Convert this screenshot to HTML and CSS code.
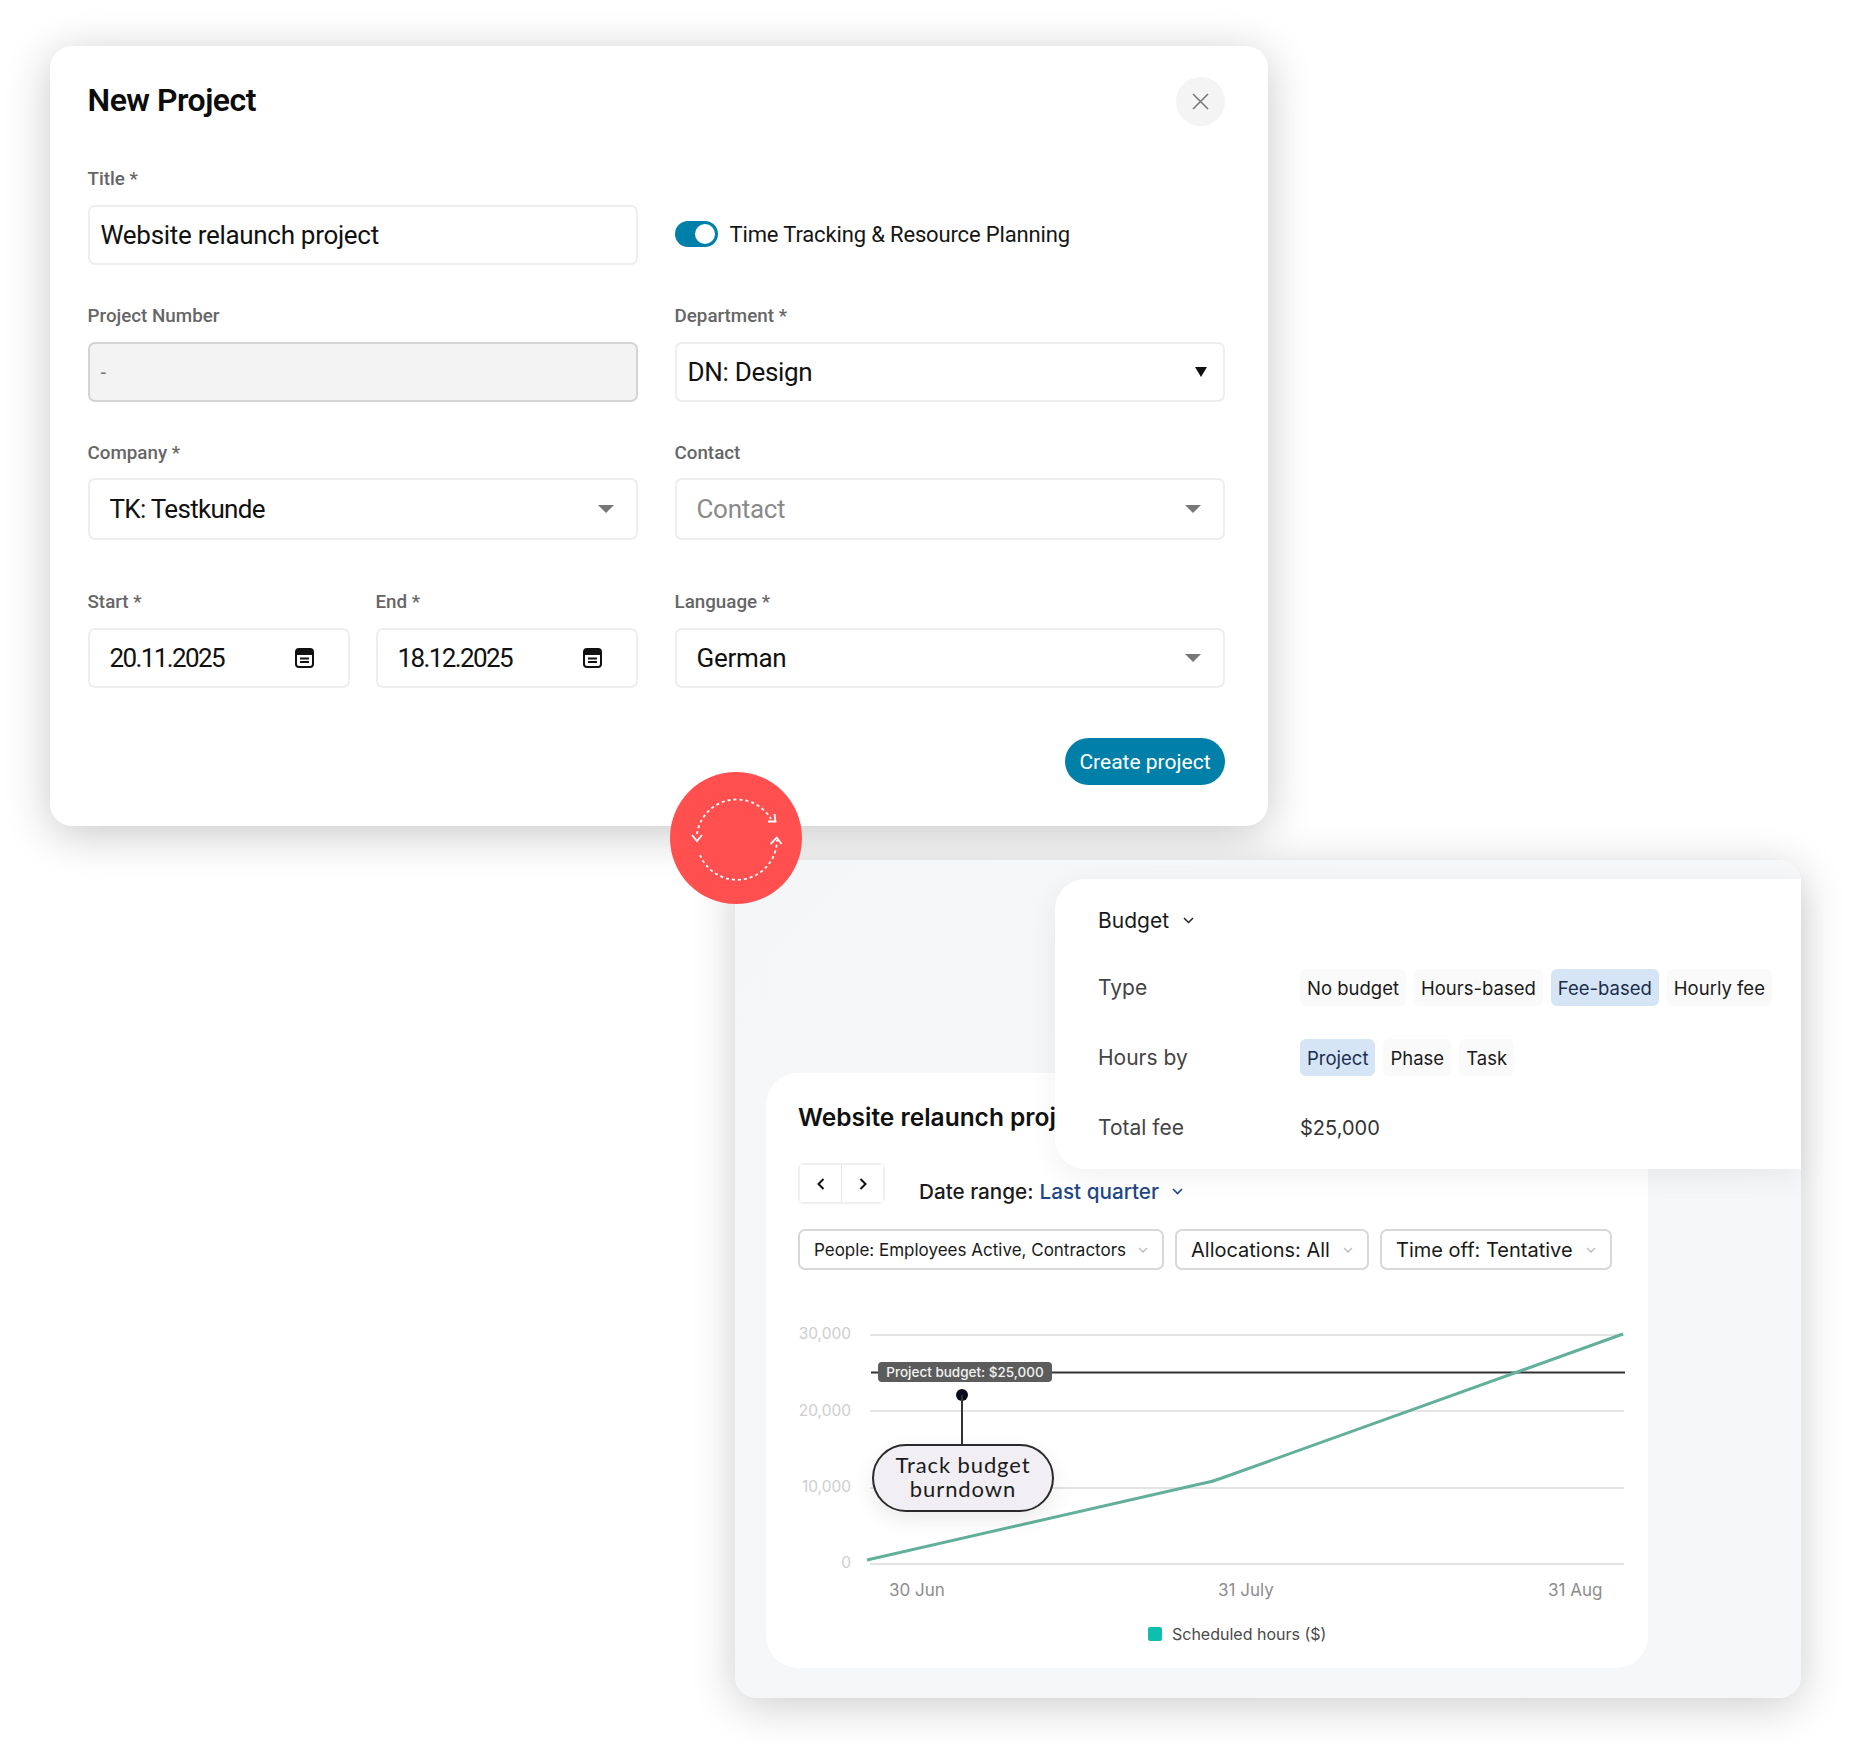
FILE: index.html
```html
<!DOCTYPE html>
<html lang="en">
<head>
    <meta charset="UTF-8">
    <title>New Project</title>
    <link rel="stylesheet" href="styles.css">
</head>
<body>
    <div class="modal">
        <div class="modal-head">
            <h1>New Project</h1>
            <button class="close-btn">
                <svg width="17" height="17" viewBox="0 0 17 17"><path d="M1 1L16 16M16 1L1 16" stroke="#7a7a7a" stroke-width="1.6" fill="none"/></svg>
            </button>
        </div>
        <div class="form-grid">
            <div class="field">
                <label>Title *</label>
                <div class="input input-title">Website relaunch project</div>
            </div>
            <div class="toggle-row">
                <span class="toggle"><span class="knob"></span></span>
                <span class="toggle-label">Time Tracking &amp; Resource Planning</span>
            </div>

            <div class="field">
                <label>Project Number</label>
                <div class="input input-disabled">-</div>
            </div>
            <div class="field">
                <label>Department *</label>
                <div class="input input-title">DN: Design <span class="caret caret-dark"></span></div>
            </div>

            <div class="field field-tall">
                <label>Company *</label>
                <div class="input input-select input-tight">TK: Testkunde <span class="caret"></span></div>
            </div>
            <div class="field field-tall">
                <label>Contact</label>
                <div class="input input-select placeholder">Contact <span class="caret"></span></div>
            </div>

            <div class="date-pair">
                <div class="field">
                    <label>Start *</label>
                    <div class="input input-select input-date">20.11.2025
                        <svg class="cal" width="19" height="20" viewBox="0 0 19 20"><rect x="1" y="1" width="17" height="18" rx="3" fill="#fff" stroke="#111" stroke-width="2"/><path d="M1 2h17v5H1z" fill="#111"/><path d="M5 10.5h9M5 14h9" stroke="#111" stroke-width="1.8"/></svg>
                    </div>
                </div>
                <div class="field">
                    <label>End *</label>
                    <div class="input input-select input-date">18.12.2025
                        <svg class="cal" width="19" height="20" viewBox="0 0 19 20"><rect x="1" y="1" width="17" height="18" rx="3" fill="#fff" stroke="#111" stroke-width="2"/><path d="M1 2h17v5H1z" fill="#111"/><path d="M5 10.5h9M5 14h9" stroke="#111" stroke-width="1.8"/></svg>
                    </div>
                </div>
            </div>
            <div class="field">
                <label>Language *</label>
                <div class="input input-select">German <span class="caret"></span></div>
            </div>
        </div>
        <div class="modal-foot">
            <button class="btn-create">Create project</button>
        </div>
        <div class="sync-badge">
            <svg width="132" height="132" viewBox="0 0 132 132" fill="none" stroke="#fff" stroke-width="1.8">
                <path d="M27 62A40 40 0 0 1 101 47" stroke-dasharray="3 3"/>
                <path d="M30 83A40 40 0 0 0 107 68" stroke-dasharray="3 3"/>
                <path d="M22 63L27 69L32 63"/>
                <path d="M98 49.5H105.5L104.5 42"/>
                <path d="M100.600 72L106.700 65.700L111.600 72"/>
            </svg>
        </div>
    </div>

    <div class="report">
        <div class="report-card">
            <h2>Website relaunch project</h2>
            <div class="range-row">
                <div class="pager">
                    <button><svg width="8" height="12" viewBox="0 0 8 12"><path d="M6.500 1L1.500 6L6.500 11" fill="none" stroke="#111" stroke-width="2"/></svg></button>
                    <button><svg width="8" height="12" viewBox="0 0 8 12"><path d="M1.500 1L6.500 6L1.500 11" fill="none" stroke="#111" stroke-width="2"/></svg></button>
                </div>
                <div class="date-range">Date range: <a>Last quarter</a>
                    <svg width="11" height="7" viewBox="0 0 11 7"><path d="M1 1L5.500 5.500L10 1" fill="none" stroke="#1f4788" stroke-width="1.600"/></svg>
                </div>
            </div>
            <div class="filters">
                <div class="filter filter-people">People: Employees Active, Contractors <svg width="10" height="6" viewBox="0 0 10 6"><path d="M1 1L5 5L9 1" fill="none" stroke="#bbb" stroke-width="1.300"/></svg></div>
                <div class="filter filter-alloc">Allocations: All <svg width="10" height="6" viewBox="0 0 10 6"><path d="M1 1L5 5L9 1" fill="none" stroke="#bbb" stroke-width="1.300"/></svg></div>
                <div class="filter filter-time">Time off: Tentative <svg width="10" height="6" viewBox="0 0 10 6"><path d="M1 1L5 5L9 1" fill="none" stroke="#bbb" stroke-width="1.300"/></svg></div>
            </div>
            <svg class="chart" width="882" height="378" viewBox="766 1290 882 378">
                <g stroke="#e4e4e4" stroke-width="2">
                    <path d="M870 1335H1624M870 1411H1624M870 1488H1624M870 1564H1624"/>
                </g>
                <g class="tick-y" text-anchor="end">
                    <text x="851" y="1339">30,000</text>
                    <text x="851" y="1416">20,000</text>
                    <text x="851" y="1492">10,000</text>
                    <text x="851" y="1568">0</text>
                </g>
                <path d="M871 1372.500H1625" stroke="#333" stroke-width="2"/>
                <path d="M867 1560L1200 1484Q1212 1482 1222 1478L1623 1334" fill="none" stroke="#62b09b" stroke-width="3"/>
                <rect x="878" y="1362" width="174" height="20" rx="4" fill="#5c5c5c"/>
                <text class="tag-text" x="965" y="1377" text-anchor="middle">Project budget: $25,000</text>
                <circle cx="962" cy="1395" r="6" fill="#0a0a1e"/>
                <path d="M962 1395V1444" stroke="#333" stroke-width="2"/>
                <rect class="pill" x="873" y="1445" width="180" height="66" rx="33" fill="#f1eff4" stroke="#2a2a2a" stroke-width="2"/>
                <text class="pill-text" x="963" y="1473" text-anchor="middle">Track budget</text>
                <text class="pill-text" x="963" y="1497" text-anchor="middle">burndown</text>
                <g class="tick-x">
                    <text x="889" y="1596">30 Jun</text>
                    <text x="1218" y="1596">31 July</text>
                    <text x="1548" y="1596">31 Aug</text>
                </g>
                <rect x="1148" y="1627" width="14" height="14" rx="2" fill="#0fbfae"/>
                <text class="legend" x="1172" y="1640">Scheduled hours ($)</text>
            </svg>
        </div>

        <div class="budget-panel">
            <div class="budget-head">Budget <svg width="11" height="7" viewBox="0 0 11 7"><path d="M1 1L5.500 5.500L10 1" fill="none" stroke="#222" stroke-width="1.500"/></svg></div>
            <div class="budget-row">
                <span class="budget-key">Type</span>
                <div class="chips">
                    <span class="chip">No budget</span>
                    <span class="chip">Hours-based</span>
                    <span class="chip chip-on">Fee-based</span>
                    <span class="chip">Hourly fee</span>
                </div>
            </div>
            <div class="budget-row">
                <span class="budget-key">Hours by</span>
                <div class="chips">
                    <span class="chip chip-on">Project</span>
                    <span class="chip">Phase</span>
                    <span class="chip">Task</span>
                </div>
            </div>
            <div class="budget-row">
                <span class="budget-key">Total fee</span>
                <span class="budget-val">$25,000</span>
            </div>
        </div>
    </div>
</body>
</html>
```

FILE: styles.css
```css
* {
    box-sizing: border-box;
    margin: 0;
    padding: 0;
}

body {
    background: #fff;
    font-family: Roboto, sans-serif;
    color: #111;
    padding: 46px 0 0 50px;
    width: 1851px;
    height: 1752px;
    overflow: hidden;
}

button {
    font-family: inherit;
    border: none;
    cursor: pointer;
}

.modal {
    position: relative;
    width: 1218px;
    height: 780px;
    padding: 31px 43px 40px 37.500px;
    background: #fff;
    border-radius: 22px;
    box-shadow: 0 8px 45px rgba(0, 0, 0, 0.22);
}

.modal-head {
    display: flex;
    justify-content: space-between;
    align-items: center;
    height: 49px;
    margin-bottom: 40px;
}

.modal-head h1 {
    font-size: 32px;
    font-weight: 600;
    letter-spacing: -0.5px;
    color: #0c0c0c;
    margin: -4px 0 0 0;
}

.close-btn {
    display: flex;
    align-items: center;
    justify-content: center;
    width: 49px;
    height: 49px;
    border-radius: 50%;
    background: #f4f4f4;
}

.form-grid {
    display: grid;
    grid-template-columns: 550px 550px;
    column-gap: 37px;
    grid-template-rows: 99px 99px 100px 99px;
    row-gap: 38px;
}

.form-grid > :nth-child(n+7) {
    margin-top: 11px;
}

.field label {
    display: block;
    height: 26px;
    line-height: 26px;
    margin-bottom: 13px;
    font-size: 18.800px;
    font-weight: 500;
    color: #666;
}

.field-tall label {
    margin-bottom: 12px;
}

.field-tall .input {
    height: 62px;
}

.input {
    position: relative;
    display: flex;
    align-items: center;
    justify-content: space-between;
    height: 60px;
    background: #fff;
    border: 2px solid #eee;
    border-radius: 7px;
    font-size: 26px;
    letter-spacing: -0.3px;
    color: #111;
}

.input-title {
    padding: 0 16px 0 11px;
}

.input-disabled {
    padding: 0 11px;
    background: #f3f3f3;
    border-color: #d4d4d4;
    color: #777;
    font-size: 20px;
}

.input-select {
    padding: 0 22px 0 20px;
}

.input-tight {
    letter-spacing: -0.7px;
}

.input-date {
    letter-spacing: -1.600px;
}

.placeholder {
    color: #8a8a8a;
}

.caret {
    width: 0;
    height: 0;
    border-left: 8px solid transparent;
    border-right: 8px solid transparent;
    border-top: 8px solid #777;
}

.caret-dark {
    border-left-width: 6px;
    border-right-width: 6px;
    border-top: 10px solid #111;
}

.toggle-row {
    display: flex;
    align-items: center;
    gap: 12px;
    margin: 38px 0 0 0;
    height: 60px;
}

.toggle {
    display: flex;
    align-items: center;
    justify-content: flex-end;
    width: 43px;
    height: 26px;
    padding-right: 3px;
    border-radius: 13px;
    background: #0080a8;
}

.knob {
    width: 20px;
    height: 20px;
    border-radius: 50%;
    background: #fff;
}

.toggle-label {
    font-size: 22px;
    letter-spacing: -0.15px;
    color: #161616;
}

.date-pair {
    display: grid;
    grid-template-columns: 262px 262px;
    column-gap: 26px;
}

.cal {
    flex: none;
    margin-right: 12px;
}

.modal-foot {
    display: flex;
    justify-content: flex-end;
    margin-top: 61px;
}

.btn-create {
    width: 160px;
    height: 47px;
    border-radius: 24px;
    background: #0080a8;
    color: #fff;
    font-size: 21px;
    font-weight: 400;
}

.sync-badge {
    position: absolute;
    left: 620px;
    top: 726px;
    z-index: 5;
    width: 132px;
    height: 132px;
    border-radius: 50%;
    background: #ff4f4f;
}

.report {
    position: relative;
    width: 1066px;
    height: 838px;
    margin: 34px 0 0 685px;
    padding: 213px 153px 30px 31px;
    background: linear-gradient(135deg, #f4f6f8 0%, #f6f7f9 100%);
    border-radius: 22px;
    box-shadow: 0 8px 45px rgba(0, 0, 0, 0.2);
    font-family: Inter, sans-serif;
}

.report-card {
    width: 882px;
    height: 595px;
    padding: 29px 0 0 32px;
    background: #fff;
    border-radius: 32px;
    overflow: hidden;
}

.report-card h2 {
    height: 30px;
    line-height: 30px;
    font-size: 24.500px;
    font-weight: 600;
    white-space: nowrap;
    color: #111;
}

.range-row {
    display: flex;
    margin-top: 31px;
}

.pager {
    display: flex;
    width: 87px;
    height: 41px;
    border: 2px solid #f0f0f0;
    border-radius: 6px;
}

.pager button {
    display: flex;
    flex: 1;
    align-items: center;
    justify-content: center;
    background: #fff;
}

.pager button + button {
    border-left: 1px solid #e8e8e8;
}

.date-range {
    display: flex;
    align-items: center;
    gap: 6px;
    height: 41px;
    margin: 8px 0 0 34px;
    font-size: 20.700px;
    font-weight: 500;
    color: #1a1a1a;
}

.date-range a {
    color: #1f4788;
}

.date-range svg {
    margin-left: 7px;
}

.filters {
    display: flex;
    gap: 11px;
    margin-top: 17px;
}

.filter {
    display: flex;
    align-items: center;
    justify-content: space-between;
    height: 41px;
    padding: 0 14px;
    border: 2px solid #d8d8d8;
    border-radius: 7px;
    font-size: 20px;
    color: #1a1a1a;
    white-space: nowrap;
}

.filter-people {
    width: 366px;
    font-size: 17px;
}

.filter-alloc {
    width: 194px;
}

.filter-time {
    width: 232px;
}

.chart {
    display: block;
    margin: 20px 0 0 -32px;
}

.tick-y text {
    font-size: 15.500px;
    fill: #cdcdcd;
}

.tick-x text {
    font-size: 17px;
    fill: #8d8d8d;
}

.tag-text {
    font-size: 13.500px;
    font-weight: 500;
    fill: #f2f2f2;
}

.pill {
    filter: drop-shadow(0 8px 10px rgba(0, 0, 0, 0.08));
}

.pill-text {
    font-family: Lato, sans-serif;
    font-size: 22px;
    letter-spacing: 0.900px;
    fill: #1c1c1c;
}

.legend {
    font-size: 16px;
    fill: #4a4a4a;
}

.budget-panel {
    position: absolute;
    top: 19px;
    right: 0;
    width: 746px;
    height: 290px;
    padding: 27px 0 0 43px;
    background: #fff;
    border-radius: 30px 0 0 30px;
    box-shadow: 0 8px 30px rgba(0, 0, 0, 0.06);
}

.budget-head {
    display: flex;
    align-items: center;
    gap: 14px;
    height: 28px;
    font-size: 21px;
    font-weight: 400;
    color: #1a1a1a;
}

.budget-row {
    display: flex;
    align-items: center;
    height: 37px;
    margin-top: 33px;
    font-size: 21px;
    color: #444;
}

.budget-row:nth-child(2) {
    margin-top: 35px;
}

.budget-key {
    width: 202px;
}

.budget-val {
    font-size: 20px;
    color: #333;
}

.chips {
    display: flex;
    gap: 8px;
}

.chip {
    display: flex;
    align-items: center;
    height: 37px;
    padding: 0 7px;
    border-radius: 6px;
    background: #fafafa;
    font-size: 18.500px;
    color: #1a1a1a;
}

.chip-on {
    background: #d6e5f5;
    color: #1a2d4d;
}
```
